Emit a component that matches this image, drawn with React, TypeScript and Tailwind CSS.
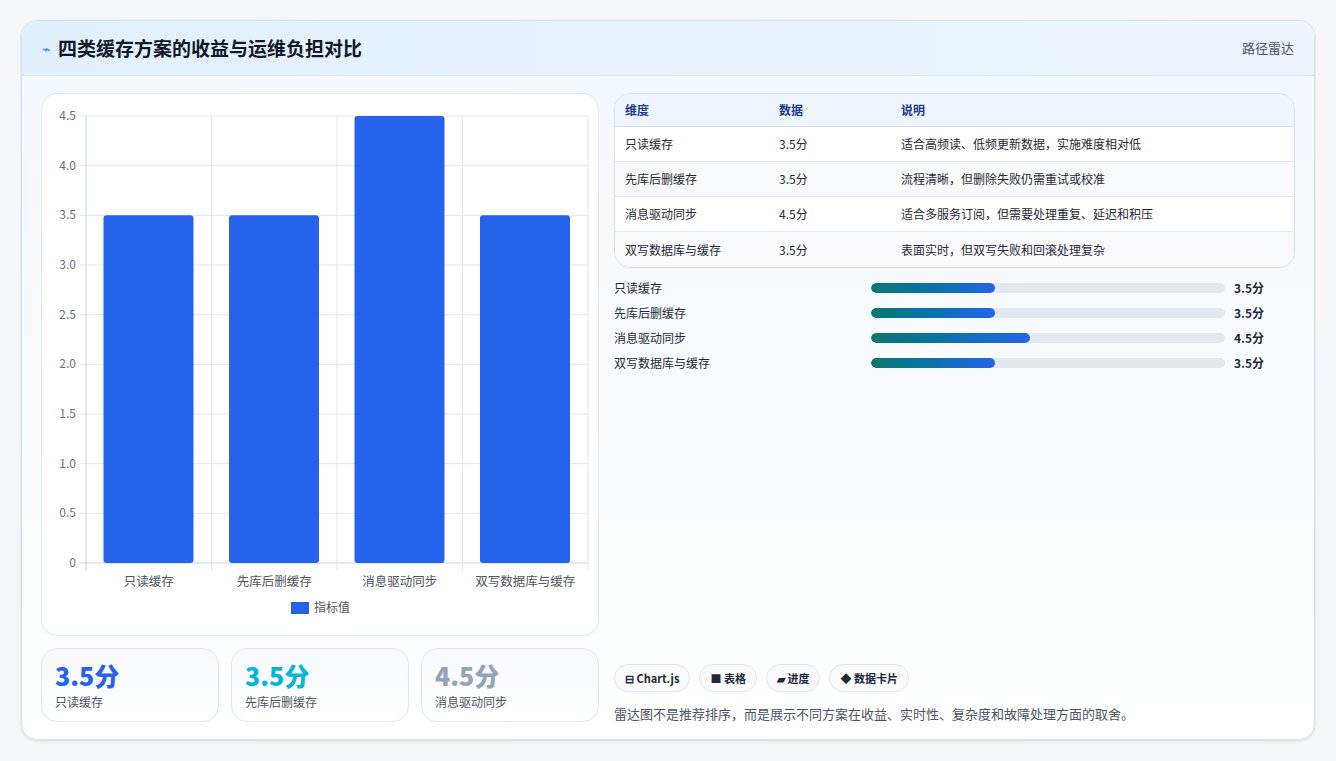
import React from "react";

const F = { fontFamily: '"Noto Sans CJK SC", "Noto Sans", sans-serif' };
const items = [
  { n: "只读缓存", v: 3.5, d: "适合高频读、低频更新数据，实施难度相对低" },
  { n: "先库后删缓存", v: 3.5, d: "流程清晰，但删除失败仍需重试或校准" },
  { n: "消息驱动同步", v: 4.5, d: "适合多服务订阅，但需要处理重复、延迟和积压" },
  { n: "双写数据库与缓存", v: 3.5, d: "表面实时，但双写失败和回滚处理复杂" },
];

function Chart() {
  const x0 = 44, x1 = 546, y0 = 22, y1 = 469;
  const ticks = [0, 0.5, 1, 1.5, 2, 2.5, 3, 3.5, 4, 4.5];
  const cw = (x1 - x0) / 4;
  const yy = (v: number) => y1 - (v / 4.5) * (y1 - y0);
  return (
    <svg width="558" height="543" className="block">
      {ticks.map((t) => (
        <g key={t}>
          <line x1={x0 - 6} x2={x1} y1={yy(t)} y2={yy(t)} stroke={t === 0 ? "#cbd5e1" : "#e5e7eb"} />
          <text x={x0 - 10} y={yy(t) + 4} textAnchor="end" fontSize="12" fill="#6b7280" style={F}>{t === 0 ? "0" : t.toFixed(1)}</text>
        </g>
      ))}
      {[0, 1, 2, 3, 4].map((i) => (
        <line key={i} x1={x0 + i * cw} x2={x0 + i * cw} y1={y0} y2={y1 + 8} stroke={i === 0 ? "#cbd5e1" : "#e5e7eb"} />
      ))}
      {items.map((it, i) => (
        <g key={i}>
          <rect x={x0 + i * cw + 17.5} y={yy(it.v)} width={90} height={y1 - yy(it.v)} rx="3" fill="#2563eb" />
          <text x={x0 + i * cw + cw / 2} y={y1 + 23} textAnchor="middle" fontSize="12.5" fill="#4b5563" style={F}>{it.n}</text>
        </g>
      ))}
      <rect x="249" y="508" width="18" height="12" fill="#2563eb" />
      <text x="272" y="518" fontSize="12" fill="#4b5563" style={F}>指标值</text>
    </svg>
  );
}

export default function App() {
  return (
    <div className="min-h-[761px] w-[1336px] bg-[#f5f6f8] pt-5 pl-[21px]" style={F}>
      <div className="w-[1294px] h-[720px] rounded-2xl border border-[#cfe3f3] bg-gradient-to-b from-[#f1f8fe] to-white overflow-hidden shadow-sm">
        <div className="h-[55px] flex items-center justify-between px-5 bg-gradient-to-r from-[#e2f0fd] to-[#eef4fd] border-b border-[#d6e7f5]">
          <div className="flex items-center gap-2">
            <span className="text-[#3b82f6] text-sm">⌁</span>
            <span className="text-[19px] font-bold text-[#111827]">四类缓存方案的收益与运维负担对比</span>
          </div>
          <span className="text-[13px] text-[#4b5563]">路径雷达</span>
        </div>
        <div className="flex gap-[15px] px-[19px] pt-[17px]">
          <div className="w-[558px] flex flex-col gap-3">
            <div className="h-[543px] bg-white rounded-2xl border border-[#dfe7f0]"><Chart /></div>
            <div className="flex gap-3">
              {[["3.5分", "只读缓存", "text-[#2563eb]"], ["3.5分", "先库后删缓存", "text-[#06b6d4]"], ["4.5分", "消息驱动同步", "text-[#94a3b8]"]].map(([v, l, c]) => (
                <div key={l} className="w-[178px] h-[74px] rounded-2xl border border-[#dde7f3] bg-gradient-to-b from-[#f7faff] to-white px-[13px] pt-[10px]">
                  <div className={`text-[25px] font-extrabold leading-[32px] ${c}`}>{v}</div>
                  <div className="text-[12px] text-[#4b5563] mt-[2px]">{l}</div>
                </div>
              ))}
            </div>
          </div>
          <div className="w-[683px] flex flex-col">
            <div className="rounded-2xl border border-[#d6e0ea] overflow-hidden bg-white text-[12px]">
              <div className="flex h-[33px] items-center bg-[#eef5fd] border-b border-[#d6e0ea] font-bold text-[#1e3a8a]">
                <div className="w-[164px] pl-[10px]">维度</div><div className="w-[122px]">数据</div><div>说明</div>
              </div>
              {items.map((it, i) => (
                <div key={i} className={`flex h-[35px] items-center text-[#1f2937] ${i < 3 ? "border-b border-[#e5eaf0]" : ""} ${i % 2 ? "bg-[#f8fafc]" : "bg-white"}`}>
                  <div className="w-[164px] pl-[10px]">{it.n}</div><div className="w-[122px]">{it.v}分</div><div>{it.d}</div>
                </div>
              ))}
            </div>
            <div className="flex flex-col gap-[9px] mt-[12px]">
              {items.map((it, i) => (
                <div key={i} className="flex items-center h-[16px] text-[12px] text-[#1f2937]">
                  <div className="w-[257px]">{it.n}</div>
                  <div className="w-[354px] h-[10px] rounded-full bg-[#e2e8f0] overflow-hidden">
                    <div className="h-full rounded-full bg-gradient-to-r from-[#0f766e] to-[#2563eb]" style={{ width: `${it.v * 10}%` }} />
                  </div>
                  <div className="ml-[9px] font-bold">{it.v}分</div>
                </div>
              ))}
            </div>
            <div className="flex gap-[9px] mt-[293px]">
              {["⊟ Chart.js", "■ 表格", "▰ 进度", "◆ 数据卡片"].map((c) => (
                <span key={c} className="h-[28px] px-[10px] rounded-full border border-[#e2e8f0] bg-[#f8fafc] text-[11px] font-bold text-[#1f2937] flex items-center">{c}</span>
              ))}
            </div>
            <div className="mt-[12px] text-[13px] text-[#4b5563]">雷达图不是推荐排序，而是展示不同方案在收益、实时性、复杂度和故障处理方面的取舍。</div>
          </div>
        </div>
      </div>
    </div>
  );
}
